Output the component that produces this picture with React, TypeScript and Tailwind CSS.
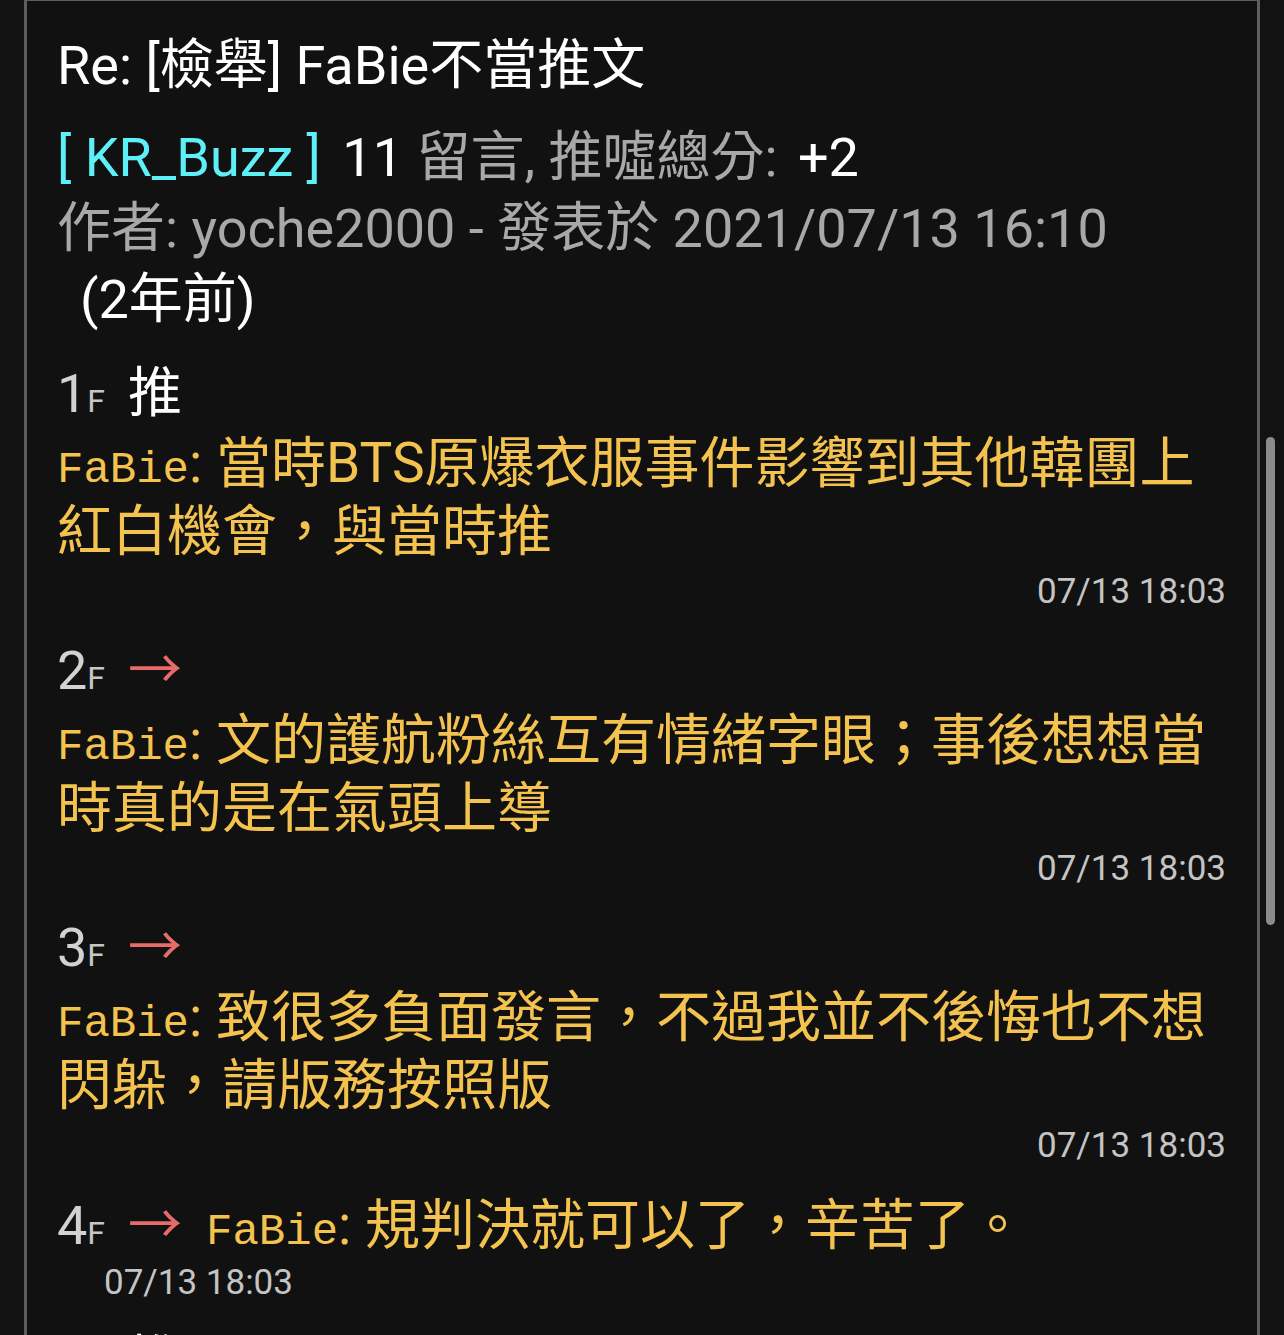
import React from "react";

interface Comment {
  floor: number;
  tag: "推" | "→";
  user: string;
  text: string;
  time: string;
  inline?: boolean;
}

const comments: Comment[] = [
  {
    floor: 1,
    tag: "推",
    user: "FaBie",
    text: "當時BTS原爆衣服事件影響到其他韓團上紅白機會，與當時推",
    time: "07/13 18:03",
  },
  {
    floor: 2,
    tag: "→",
    user: "FaBie",
    text: "文的護航粉絲互有情緒字眼；事後想想當時真的是在氣頭上導",
    time: "07/13 18:03",
  },
  {
    floor: 3,
    tag: "→",
    user: "FaBie",
    text: "致很多負面發言，不過我並不後悔也不想閃躲，請版務按照版",
    time: "07/13 18:03",
  },
  {
    floor: 4,
    tag: "→",
    user: "FaBie",
    text: "規判決就可以了，辛苦了。",
    time: "07/13 18:03",
    inline: true,
  },
  {
    floor: 5,
    tag: "推",
    user: "FaBie",
    text: "謝謝版主",
    time: "07/13 18:04",
  },
];

function Floor({ n, tag }: { n: number; tag: Comment["tag"] }) {
  return (
    <>
      <span className="text-[#d2d2d2]">{n}</span>
      <span className="text-[32px] leading-none text-[#c6c6c6]">F</span>
      {tag === "推" ? (
        <span className="ml-[23px] text-white">推</span>
      ) : (
        <span className="ml-[23px] text-[#e86b6b]">→</span>
      )}
    </>
  );
}

function UserPrefix({ user }: { user: string }) {
  return (
    <>
      <span className="font-['Liberation_Mono',monospace] text-[44px] leading-none">
        {user}
      </span>
      <span>: </span>
    </>
  );
}

function CommentBlock({ c }: { c: Comment }) {
  if (c.inline) {
    return (
      <div className="mt-[22px]">
        <div className="leading-[70px] text-[#f3c24f]">
          <Floor n={c.floor} tag={c.tag} />
          <span className="ml-[24px] text-[55px]">
            <UserPrefix user={c.user} />
            {c.text}
          </span>
        </div>
        <div className="pl-[47px] text-[35px] leading-[44px] text-[#c4c4c4]">
          {c.time}
        </div>
      </div>
    );
  }
  return (
    <div className="mt-[22px] first:mt-0">
      <div className="leading-[70px]">
        <Floor n={c.floor} tag={c.tag} />
      </div>
      <div className="text-[55px] leading-[68px] text-[#f3c24f]">
        <UserPrefix user={c.user} />
        {c.text}
      </div>
      <div className="mt-[5px] text-right text-[35px] leading-[44px] text-[#c4c4c4]">
        {c.time}
      </div>
    </div>
  );
}

export default function App() {
  return (
    <div className="flex h-[1335px] w-full overflow-hidden bg-[#121212] font-['Roboto','Noto_Sans_CJK_TC',sans-serif] text-[54px]">
      <div className="w-[24px] flex-none" />
      <div className="flex-1 border-x-[3px] border-t border-[#5e5e5e] bg-[#111111] pl-[30px] pr-[31px] pt-[30px]">
        <div className="leading-[70px] text-white">Re: [檢舉] FaBie不當推文</div>

        <div className="mt-[21px] leading-[71px] text-[#a8a8a8]">
          <div>
            <span className="text-[#5ef0f7]">[ KR_Buzz ]</span>
            <span className="ml-[8px] text-white"> 11 </span>
            <span>留言, 推噓總分: </span>
            <span className="ml-[7px] text-white">+2</span>
          </div>
          <div>作者: yoche2000 - 發表於 2021/07/13 16:10</div>
          <div className="pl-[23px] text-white">(2年前)</div>
        </div>

        <div className="mt-[24px]">
          {comments.map((c) => (
            <CommentBlock key={c.floor} c={c} />
          ))}
        </div>
      </div>
      <div className="w-[24px] flex-none pl-[6px]">
        <div className="mt-[437px] h-[488px] w-[9px] rounded-full bg-[#8b8b8b]" />
      </div>
    </div>
  );
}
